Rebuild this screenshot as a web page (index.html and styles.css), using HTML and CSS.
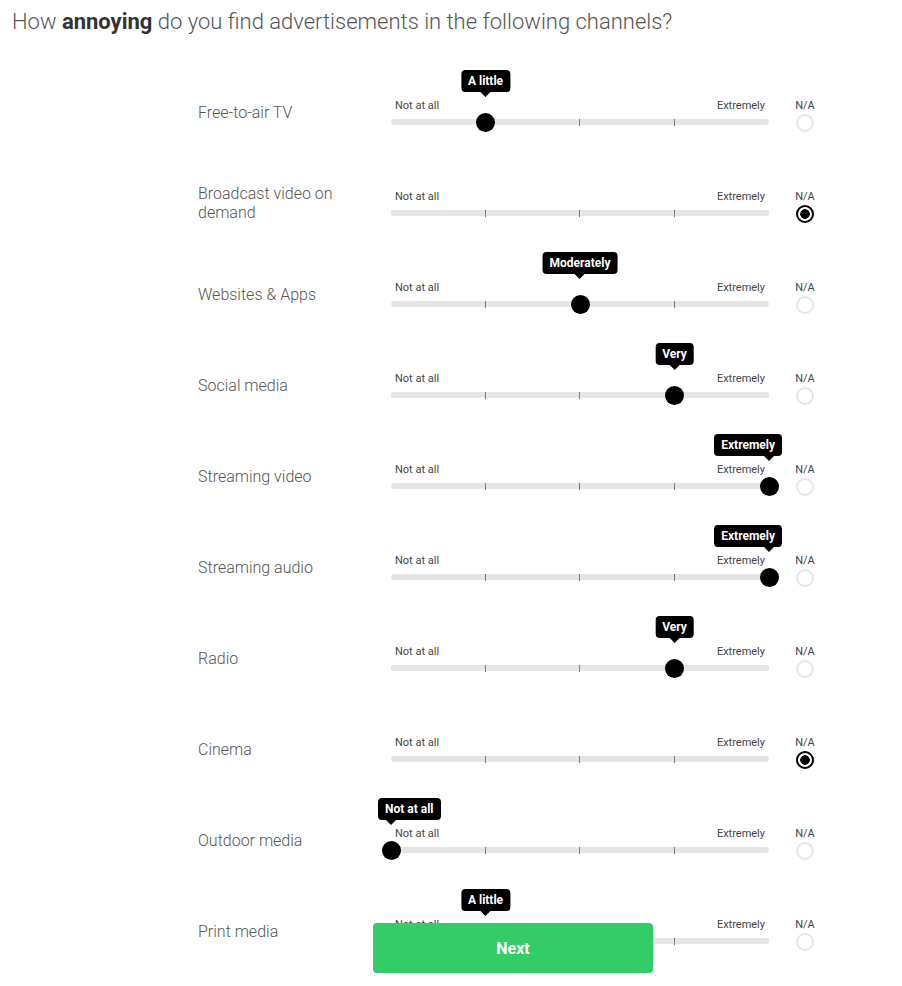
FILE: index.html
```html
<!DOCTYPE html>
<html lang="en">
<head>
<meta charset="utf-8">
<title>Survey</title>
<link rel="stylesheet" href="styles.css">
</head>
<body>
<h1 class="question">How <strong>annoying</strong> do you find advertisements in the following channels?</h1>

<div class="survey">
  <div class="label"><span>Free-to-air TV</span></div>
  <div class="scale">
    <div class="ends"><span>Not at all</span><span>Extremely</span></div>
    <div class="track-wrap">
      <div class="track"></div>
      <i class="tick t1"></i><i class="tick t2"></i><i class="tick t3"></i>
      <div class="thumb" style="left:25%"><div class="tip">A little</div></div>
    </div>
  </div>
  <div class="na"><span class="na-label">N/A</span><span class="radio"></span></div>

  <div class="label"><span>Broadcast video on demand</span></div>
  <div class="scale">
    <div class="ends"><span>Not at all</span><span>Extremely</span></div>
    <div class="track-wrap">
      <div class="track"></div>
      <i class="tick t1"></i><i class="tick t2"></i><i class="tick t3"></i>
    </div>
  </div>
  <div class="na"><span class="na-label">N/A</span><span class="radio checked"></span></div>

  <div class="label"><span>Websites &amp; Apps</span></div>
  <div class="scale">
    <div class="ends"><span>Not at all</span><span>Extremely</span></div>
    <div class="track-wrap">
      <div class="track"></div>
      <i class="tick t1"></i><i class="tick t2"></i><i class="tick t3"></i>
      <div class="thumb" style="left:50%"><div class="tip">Moderately</div></div>
    </div>
  </div>
  <div class="na"><span class="na-label">N/A</span><span class="radio"></span></div>

  <div class="label"><span>Social media</span></div>
  <div class="scale">
    <div class="ends"><span>Not at all</span><span>Extremely</span></div>
    <div class="track-wrap">
      <div class="track"></div>
      <i class="tick t1"></i><i class="tick t2"></i><i class="tick t3"></i>
      <div class="thumb" style="left:75%"><div class="tip">Very</div></div>
    </div>
  </div>
  <div class="na"><span class="na-label">N/A</span><span class="radio"></span></div>

  <div class="label"><span>Streaming video</span></div>
  <div class="scale">
    <div class="ends"><span>Not at all</span><span>Extremely</span></div>
    <div class="track-wrap">
      <div class="track"></div>
      <i class="tick t1"></i><i class="tick t2"></i><i class="tick t3"></i>
      <div class="thumb" style="left:100%"><div class="tip tip-end">Extremely</div></div>
    </div>
  </div>
  <div class="na"><span class="na-label">N/A</span><span class="radio"></span></div>

  <div class="label"><span>Streaming audio</span></div>
  <div class="scale">
    <div class="ends"><span>Not at all</span><span>Extremely</span></div>
    <div class="track-wrap">
      <div class="track"></div>
      <i class="tick t1"></i><i class="tick t2"></i><i class="tick t3"></i>
      <div class="thumb" style="left:100%"><div class="tip tip-end">Extremely</div></div>
    </div>
  </div>
  <div class="na"><span class="na-label">N/A</span><span class="radio"></span></div>

  <div class="label"><span>Radio</span></div>
  <div class="scale">
    <div class="ends"><span>Not at all</span><span>Extremely</span></div>
    <div class="track-wrap">
      <div class="track"></div>
      <i class="tick t1"></i><i class="tick t2"></i><i class="tick t3"></i>
      <div class="thumb" style="left:75%"><div class="tip">Very</div></div>
    </div>
  </div>
  <div class="na"><span class="na-label">N/A</span><span class="radio"></span></div>

  <div class="label"><span>Cinema</span></div>
  <div class="scale">
    <div class="ends"><span>Not at all</span><span>Extremely</span></div>
    <div class="track-wrap">
      <div class="track"></div>
      <i class="tick t1"></i><i class="tick t2"></i><i class="tick t3"></i>
    </div>
  </div>
  <div class="na"><span class="na-label">N/A</span><span class="radio checked"></span></div>

  <div class="label"><span>Outdoor media</span></div>
  <div class="scale">
    <div class="ends"><span>Not at all</span><span>Extremely</span></div>
    <div class="track-wrap">
      <div class="track"></div>
      <i class="tick t1"></i><i class="tick t2"></i><i class="tick t3"></i>
      <div class="thumb" style="left:0%"><div class="tip tip-start">Not at all</div></div>
    </div>
  </div>
  <div class="na"><span class="na-label">N/A</span><span class="radio"></span></div>

  <div class="label"><span>Print media</span></div>
  <div class="scale">
    <div class="ends"><span>Not at all</span><span>Extremely</span></div>
    <div class="track-wrap">
      <div class="track"></div>
      <i class="tick t1"></i><i class="tick t2"></i><i class="tick t3"></i>
      <div class="thumb" style="left:25%"><div class="tip">A little</div></div>
    </div>
  </div>
  <div class="na"><span class="na-label">N/A</span><span class="radio"></span></div>
</div>

<button class="next" type="button">Next</button>
</body>
</html>
```
FILE: styles.css
```css
* { box-sizing: border-box; }

html, body {
  margin: 0;
  padding: 0;
  background: #fff;
}

body {
  font-family: Roboto, "Liberation Sans", Arial, sans-serif;
  color: #555;
}

.question {
  margin: 0;
  padding: 9px 0 0 12px;
  font-size: 22px;
  line-height: 26px;
  font-weight: 300;
  color: #555;
}

.question strong {
  font-weight: 700;
  color: #333;
}

.survey {
  display: grid;
  grid-template-columns: 193px 378px 72px;
  row-gap: 21px;
  margin: 42px 0 0 198px;
}

.label {
  height: 70px;
  display: flex;
  align-items: center;
}

.label span {
  max-width: 150px;
  font-size: 16px;
  line-height: 19px;
  font-weight: 300;
  color: #555;
}

.scale {
  padding-top: 22px;
}

.ends {
  display: flex;
  justify-content: space-between;
  padding: 0 4px;
  font-size: 11px;
  line-height: 13px;
  color: #444;
}

.track-wrap {
  position: relative;
  height: 20px;
  padding-top: 7px;
}

.track {
  height: 6px;
  border-radius: 3px;
  background: #e5e5e5;
}

.tick {
  position: absolute;
  top: 7px;
  width: 1px;
  height: 7px;
  margin-left: -1px;
  background: #7a7a7a;
}

.t1 { left: 25%; }
.t2 { left: 50%; }
.t3 { left: 75%; }

.thumb {
  position: absolute;
  top: 0.5px;
  width: 19px;
  height: 19px;
  margin-left: -9.5px;
  border-radius: 50%;
  background: #000;
}

.tip {
  position: absolute;
  bottom: calc(100% + 21px);
  left: 50%;
  transform: translateX(-50%);
  height: 22px;
  padding: 0 7px;
  border-radius: 4px;
  background: #000;
  color: #fff;
  font-size: 12px;
  line-height: 22px;
  font-weight: 700;
  white-space: nowrap;
}

.tip::after {
  content: "";
  position: absolute;
  top: 100%;
  left: 50%;
  margin-left: -5px;
  border-left: 5px solid transparent;
  border-right: 5px solid transparent;
  border-top: 5px solid #000;
}

.tip-start {
  left: -3.5px;
  transform: none;
}

.tip-start::after {
  left: 13px;
}

.tip-end {
  left: auto;
  right: -3.5px;
  transform: none;
}

.tip-end::after {
  left: auto;
  right: 8px;
}

.na {
  padding-top: 22px;
  display: flex;
  flex-direction: column;
  align-items: center;
}

.na-label {
  font-size: 11px;
  line-height: 13px;
  color: #444;
}

.radio {
  margin-top: 2px;
  width: 18px;
  height: 18px;
  border-radius: 50%;
  border: 2px solid #e6e6e6;
  background: #fff;
}

.radio.checked {
  border-color: #000;
  background: radial-gradient(circle, #000 0 4.5px, #fff 5px);
}

.next {
  position: fixed;
  left: 373px;
  bottom: 13px;
  width: 280px;
  height: 50px;
  border: none;
  border-radius: 4px;
  background: #33cc66;
  color: #fff;
  font-family: Roboto, "Liberation Sans", Arial, sans-serif;
  font-size: 16px;
  font-weight: 700;
  cursor: pointer;
}
```
